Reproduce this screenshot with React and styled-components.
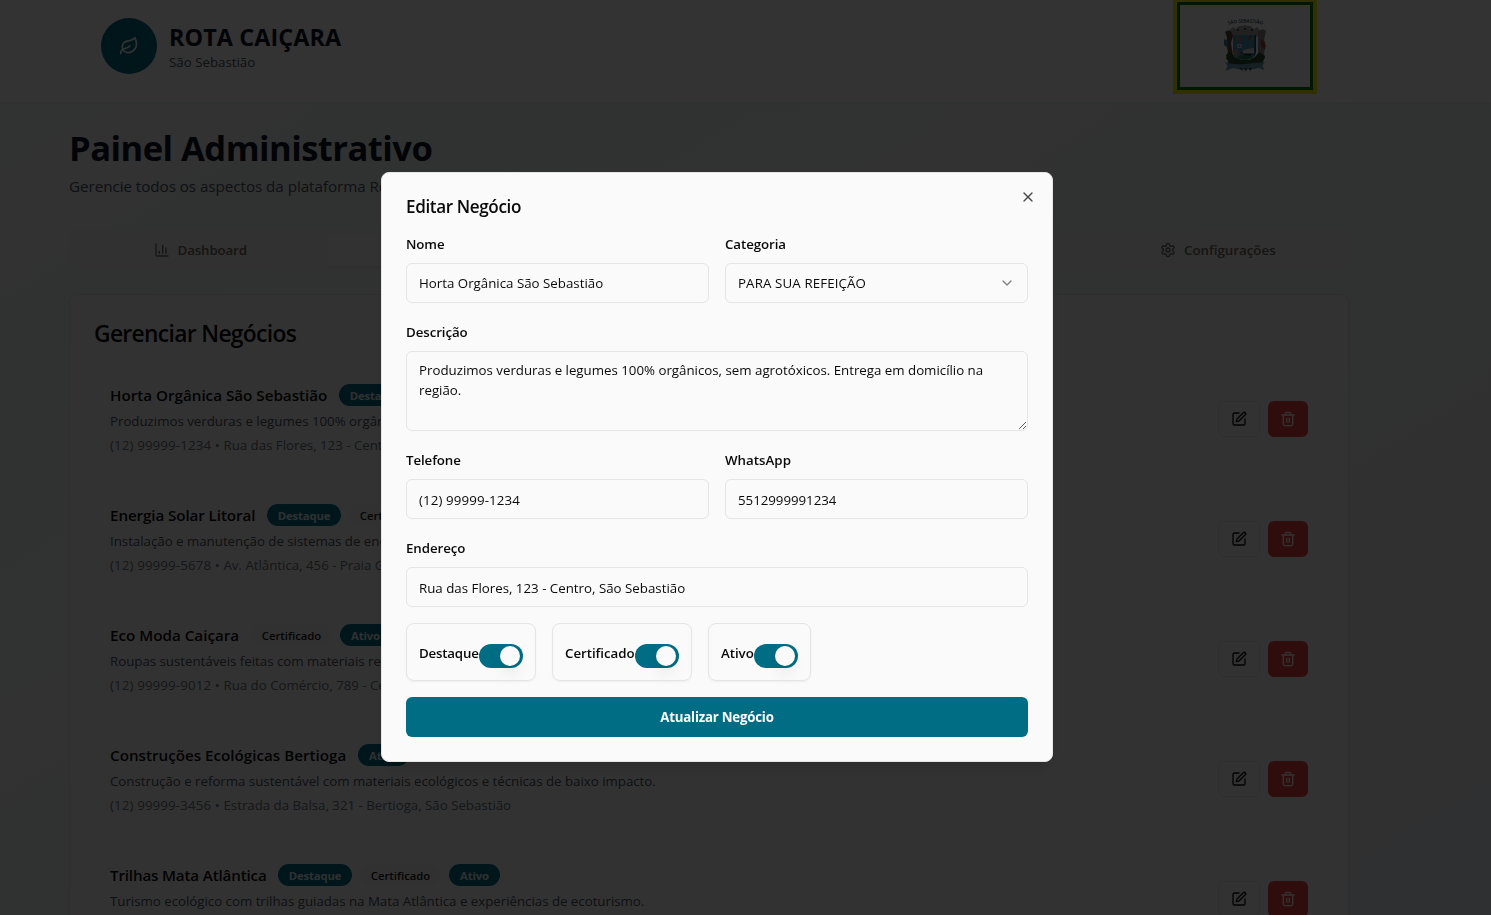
import React from "react";
import styled, { createGlobalStyle } from "styled-components";
import { Leaf, ChartColumn, SquarePen, Trash2, X, ChevronDown } from "lucide-react";

const GlobalStyle = createGlobalStyle`
  *, *::before, *::after { box-sizing: border-box; }
  html, body { margin: 0; height: 100%; overflow: hidden; }
  body {
    font-family: "Segoe UI", "Open Sans", "Noto Sans", sans-serif;
    color: #0a0a0a;
    font-size: 15px;
  }
  h1, h2, h3, p { margin: 0; }
  button { font-family: inherit; border: 0; padding: 0; }
`;

const Page = styled.div`
  height: 915px;
  overflow: hidden;
  background: linear-gradient(to bottom right, #f8faf9 0%, #f1f7f4 18%, #f2f7f5 42%, #f1f3f6 56%, #eceef3 100%);
`;

const Header = styled.header`
  height: 103px;
  background: #fefefe;
  border-bottom: 1px solid #eceeed;
  box-shadow: 0 1px 2px rgba(0, 0, 0, 0.05);
`;

const HeaderInner = styled.div`
  display: flex;
  align-items: center;
  justify-content: space-between;
  width: 1216px;
  height: 92px;
  margin-left: 101px;
`;

const Brand = styled.div`
  display: flex;
  align-items: center;
  gap: 12px;
`;

const BrandMark = styled.div`
  display: grid;
  place-items: center;
  width: 56px;
  height: 56px;
  border-radius: 50%;
  background: #006d85;
  color: #fff;
`;

const BrandName = styled.div`
  font-size: 23.4px;
  line-height: 32px;
  font-weight: 700;
  letter-spacing: 0.08px;
  color: #0f172a;
  white-space: nowrap;
`;

const BrandPlace = styled.div`
  font-size: 13.3px;
  line-height: 18px;
  color: #4b5563;
  white-space: nowrap;
`;

const Flag = styled.div`
  flex: none;
  width: 144px;
  height: 96px;
  border: 4px solid #f5f000;
`;

const FlagField = styled.div`
  display: grid;
  place-items: center;
  height: 100%;
  border: 3.5px solid #007a10;
  background: #fff;
`;

const Main = styled.main`
  width: 1280px;
  margin-left: 69px;
  padding-top: 25px;
`;

const PageTitle = styled.h1`
  font-size: 34.6px;
  line-height: 40px;
  font-weight: 700;
  letter-spacing: -0.55px;
  color: #0f172a;
`;

const PageLead = styled.p`
  margin-top: 6px;
  font-size: 15.2px;
  line-height: 24px;
  letter-spacing: -0.04px;
  color: #4b5563;
  white-space: nowrap;
`;

const TabList = styled.div`
  display: grid;
  grid-template-columns: repeat(5, 1fr);
  height: 40px;
  margin-top: 32px;
  padding: 4px;
  border-radius: 6px;
  background: #f5f4f3;
`;

const Tab = styled.div`
  display: flex;
  align-items: center;
  justify-content: center;
  gap: 8px;
  border-radius: 4px;
  font-size: 13.3px;
  font-weight: 600;
  letter-spacing: ${(p) => p.$track || 0}px;
  color: #6d6862;
  background: ${(p) => (p.$active ? "#fafafa" : "transparent")};
  box-shadow: ${(p) => (p.$active ? "0 1px 2px rgba(0,0,0,.08)" : "none")};
`;

const Card = styled.section`
  height: 760px;
  margin-top: 24px;
  padding: 24px;
  border: 1px solid #e5e5e5;
  border-radius: 8px;
  background: #fafafa;
  box-shadow: 0 1px 2px rgba(0, 0, 0, 0.05);
`;

const CardTitle = styled.h2`
  font-size: 22.8px;
  line-height: 29px;
  font-weight: 600;
  letter-spacing: -0.66px;
`;

const BusinessList = styled.div`
  display: flex;
  flex-direction: column;
  gap: 16px;
  margin-top: 19px;
`;

const BusinessRow = styled.div`
  display: flex;
  align-items: center;
  justify-content: space-between;
  height: 104px;
  padding: 16px;
`;

const BusinessInfo = styled.div`
  display: flex;
  flex-direction: column;
  gap: 4px;
`;

const NameLine = styled.div`
  display: flex;
  align-items: center;
  gap: 12px;
  height: 24px;
`;

const BusinessName = styled.h3`
  width: ${(p) => p.$width}px;
  font-size: 15.2px;
  line-height: 24px;
  font-weight: 600;
  letter-spacing: ${(p) => p.$track || 0}px;
  white-space: nowrap;
`;

const Badges = styled.div`
  display: flex;
  gap: 8px;
`;

const badgeWidths = { Destaque: 74, Certificado: 81, Ativo: 51 };

const Badge = styled.span`
  display: flex;
  align-items: center;
  justify-content: center;
  width: ${(p) => p.$width}px;
  height: 22px;
  border-radius: 11px;
  font-size: 11.3px;
  font-weight: ${(p) => (p.$quiet ? 600 : 700)};
  letter-spacing: ${(p) => (p.$quiet ? 0 : -0.15)}px;
  color: ${(p) => (p.$quiet ? "#171717" : "#e6f1f3")};
  background: ${(p) => (p.$quiet ? "#f7f6f5" : "#006d85")};
`;

const Detail = styled.p`
  font-size: 13.3px;
  line-height: 20px;
  letter-spacing: -0.02px;
  color: ${(p) => (p.$soft ? "#6b7280" : "#4b5563")};
  white-space: nowrap;
`;

const Phone = styled.span`
  letter-spacing: 0.13px;
`;

const RowActions = styled.div`
  display: flex;
  gap: 8px;
`;

const IconButton = styled.button`
  display: grid;
  place-items: center;
  width: ${(p) => (p.$danger ? 40 : 42)}px;
  height: 36px;
  border-radius: 6px;
  border: ${(p) => (p.$danger ? "0" : "1px solid #e5e5e5")};
  color: ${(p) => (p.$danger ? "#fafafa" : "#0a0a0a")};
  background: ${(p) => (p.$danger ? "#ef4444" : "#fafafa")};
`;

const Overlay = styled.div`
  position: fixed;
  inset: 0;
  padding: 172px 0 0 381px;
  background: rgba(0, 0, 0, 0.8);
`;

const Dialog = styled.div`
  position: relative;
  display: flex;
  flex-direction: column;
  gap: 16px;
  width: 672px;
  height: 590px;
  padding: 24px;
  border: 1px solid #e5e5e5;
  border-radius: 8px;
  background: #fafafa;
  box-shadow: 0 10px 15px -3px rgba(0, 0, 0, 0.1), 0 4px 6px -4px rgba(0, 0, 0, 0.1);
`;

const DialogTitle = styled.h2`
  height: 18px;
  font-size: 17.1px;
  line-height: 20px;
  font-weight: 600;
  letter-spacing: -0.38px;
`;

const CloseButton = styled.button`
  position: absolute;
  top: 16px;
  right: 16px;
  width: 16px;
  height: 16px;
  background: none;
  color: #0a0a0a;
  opacity: 0.75;
`;

const FieldPair = styled.div`
  display: grid;
  grid-template-columns: 1fr 1fr;
  gap: 16px;
`;

const Field = styled.div`
  display: flex;
  flex-direction: column;
  gap: 8px;
`;

const Label = styled.label`
  height: 24px;
  font-size: 13.3px;
  line-height: 26px;
  font-weight: 600;
  letter-spacing: ${(p) => p.$track ?? -0.08}px;
  white-space: nowrap;
`;

const TextBox = styled.div`
  display: flex;
  align-items: center;
  justify-content: space-between;
  height: 40px;
  padding: ${(p) => p.$drop || 0}px 12px 0;
  border: 1px solid #e5e5e5;
  border-radius: 6px;
  font-size: 13.3px;
  letter-spacing: ${(p) => p.$track || 0}px;
  white-space: nowrap;
`;

const TextArea = styled.div`
  height: 80px;
  padding: 8px 12px;
  border: 1px solid #e5e5e5;
  border-radius: 6px;
  font-size: 13.3px;
  line-height: 20px;
  letter-spacing: -0.01px;
  overflow: auto;
  resize: vertical;
`;

const Toggles = styled.div`
  display: flex;
  gap: 16px;
`;

const ToggleCard = styled.div`
  display: flex;
  align-items: flex-end;
  justify-content: space-between;
  width: ${(p) => p.$width}px;
  height: 58px;
  padding: 12px;
  border: 1px solid #e5e5e5;
  border-radius: 8px;
  box-shadow: 0 1px 2px rgba(0, 0, 0, 0.05);
`;

const ToggleLabel = styled(Label)`
  height: 30px;
  line-height: 30px;
`;

const Switch = styled.span`
  display: flex;
  justify-content: flex-end;
  flex: none;
  width: 44px;
  height: 24px;
  padding: 2px;
  border-radius: 12px;
  background: #006d85;
`;

const Knob = styled.span`
  width: 20px;
  height: 20px;
  margin-right: 1px;
  border-radius: 50%;
  background: #fafafa;
  box-shadow: 0 10px 15px -3px rgba(0, 0, 0, 0.1), 0 4px 6px -4px rgba(0, 0, 0, 0.1);
`;

const SubmitButton = styled.button`
  height: 40px;
  flex: none;
  border-radius: 6px;
  background: #006d85;
  color: #fafafa;
  font-size: 13.3px;
  font-weight: 700;
  letter-spacing: -0.24px;
`;

function GearIcon() {
  return (
    <svg width="16" height="16" viewBox="0 0 24 24" fill="none" stroke="currentColor" strokeWidth="2" strokeLinecap="round" strokeLinejoin="round">
      <path d="M12.22 2h-.44a2 2 0 0 0-2 2v.18a2 2 0 0 1-1 1.73l-.43.25a2 2 0 0 1-2 0l-.15-.08a2 2 0 0 0-2.73.73l-.22.38a2 2 0 0 0 .73 2.73l.15.1a2 2 0 0 1 1 1.72v.51a2 2 0 0 1-1 1.74l-.15.09a2 2 0 0 0-.73 2.73l.22.38a2 2 0 0 0 2.73.73l.15-.08a2 2 0 0 1 2 0l.43.25a2 2 0 0 1 1 1.73V20a2 2 0 0 0 2 2h.44a2 2 0 0 0 2-2v-.18a2 2 0 0 1 1-1.73l.43-.25a2 2 0 0 1 2 0l.15.08a2 2 0 0 0 2.73-.73l.22-.39a2 2 0 0 0-.73-2.73l-.15-.08a2 2 0 0 1-1-1.74v-.5a2 2 0 0 1 1-1.74l.15-.09a2 2 0 0 0 .73-2.73l-.22-.38a2 2 0 0 0-2.73-.73l-.15.08a2 2 0 0 1-2 0l-.43-.25a2 2 0 0 1-1-1.73V4a2 2 0 0 0-2-2z" />
      <circle cx="12" cy="12" r="3" />
    </svg>
  );
}

function CoatOfArms() {
  return (
    <svg width="44" height="60" viewBox="0 -4 44 60">
      <defs>
        <path id="motto" d="M4 5 Q22 0 41 5" />
      </defs>
      <text fontSize="4.6" fontWeight="600" fill="#333">
        <textPath href="#motto" startOffset="50%" textAnchor="middle">SÃO SEBASTIÃO</textPath>
      </text>
      <g transform="translate(0 -3)">
        <path d="M7 13l3-3 3 2 3-3h3l3-1 3 1h3l3 3 3-2 3 3-3 7H10z" fill="#a3a3a3" />
        <g fill="#333">
          <circle cx="15" cy="13" r="1" />
          <circle cx="22" cy="12" r="1" />
          <circle cx="29" cy="13" r="1" />
        </g>
        <path d="M2 15q5-4 7 1l1 3-2 7 2 13-5 4-2-1 2-8-2-6 1-8z" fill="#59483f" />
        <path d="M1 22l4 2v7l-4-3z" fill="#437b9c" />
        <path d="M35 15q5-5 8-1l-2 9 2 6-2 7 1 6h-4l-3-8z" fill="#8f8286" />
        <path d="M38 22l4 3v7l-4-2z" fill="#ae4438" />
        <path d="M3 38l5-3 4 5 7 3h7l6-3 4-5 6 4-3 9H6z" fill="#284b2c" />
        <path d="M10 18h23v17q-1 8-11.500 8t-11.500-8z" fill="#4f90ba" />
        <path d="M33 18v17l-1.500 5V18z" fill="#293d50" />
        <circle cx="16" cy="22" r="2.300" fill="#c07a50" />
        <path d="M24 19l2 2 3-2-1 4-2 1z" fill="#a76949" />
        <path d="M26 18.500h3v2.500h-3z" fill="#3f8050" />
        <path d="M14.500 27h4v4h-4z" fill="#dfe3ec" />
        <path d="M16 28h1.300v2H16z" fill="#a33c55" />
        <path d="M11 33h4v7h-3z" fill="#b08b58" />
        <path d="M17.500 34l3 1.500-3 2z" fill="#a33131" />
        <path d="M19 34l5-2 7-1v5h-10z" fill="#d9dcdf" />
        <path d="M20 37h10l-3 2h-5z" fill="#2c211b" />
        <path d="M14 40q8-4 16 0-4 3-8 3t-8-3z" fill="#1f7a44" />
        <path d="M2 45q9 3 19.500 2t20-2l-2 4 2 4-6-2q-13 3-26 0l-7 3 2-5z" fill="#6a9bb6" />
        <path d="M16 51h3l1 3zM21 51h3l-1 3.500zM26 51h3l-2 3z" fill="#333" />
      </g>
    </svg>
  );
}

const businesses = [
  {
    name: "Horta Orgânica São Sebastião",
    width: 217,
    badges: ["Destaque"],
    about: "Produzimos verduras e legumes 100% orgânicos",
    phone: "(12) 99999-1234",
    address: "Rua das Flores, 123 - Centro",
  },
  {
    name: "Energia Solar Litoral",
    width: 145,
    track: -0.1,
    badges: ["Destaque", "Certificado"],
    about: "Instalação e manutenção de sistemas de energia",
    phone: "(12) 99999-5678",
    address: "Av. Atlântica, 456 - Praia Grande",
  },
  {
    name: "Eco Moda Caiçara",
    width: 129,
    badges: ["Certificado", "Ativo"],
    about: "Roupas sustentáveis feitas com materiais reciclados",
    phone: "(12) 99999-9012",
    address: "Rua do Comércio, 789 - Centro",
  },
  {
    name: "Construções Ecológicas Bertioga",
    width: 236,
    badges: ["Ativo"],
    about: "Construção e reforma sustentável com materiais ecológicos e técnicas de baixo impacto.",
    phone: "(12) 99999-3456",
    address: "Estrada da Balsa, 321 - Bertioga, São Sebastião",
  },
  {
    name: "Trilhas Mata Atlântica",
    width: 156,
    track: -0.17,
    badges: ["Destaque", "Certificado", "Ativo"],
    about: "Turismo ecológico com trilhas guiadas na Mata Atlântica e experiências de ecoturismo.",
  },
];

function Business({ item }) {
  return (
    <BusinessRow>
      <BusinessInfo>
        <NameLine>
          <BusinessName $width={item.width} $track={item.track}>{item.name}</BusinessName>
          <Badges>
            {item.badges.map((b) => (
              <Badge key={b} $width={badgeWidths[b]} $quiet={b === "Certificado"}>{b}</Badge>
            ))}
          </Badges>
        </NameLine>
        <Detail>{item.about}</Detail>
        <Detail $soft>
          {item.phone ? <><Phone>{item.phone} • </Phone>{item.address}</> : "\u00a0"}
        </Detail>
      </BusinessInfo>
      <RowActions>
        <IconButton aria-label="Editar"><SquarePen size={16} /></IconButton>
        <IconButton $danger aria-label="Excluir"><Trash2 size={16} /></IconButton>
      </RowActions>
    </BusinessRow>
  );
}

function Toggle({ label, width, track }) {
  return (
    <ToggleCard $width={width}>
      <ToggleLabel $track={track}>{label}</ToggleLabel>
      <Switch><Knob /></Switch>
    </ToggleCard>
  );
}

function EditDialog() {
  return (
    <Dialog role="dialog">
      <DialogTitle>Editar Negócio</DialogTitle>
      <CloseButton aria-label="Fechar"><X size={16} /></CloseButton>
      <FieldPair>
        <Field>
          <Label>Nome</Label>
          <TextBox>Horta Orgânica São Sebastião</TextBox>
        </Field>
        <Field>
          <Label>Categoria</Label>
          <TextBox $track={0.12}>
            PARA SUA REFEIÇÃO
            <ChevronDown size={16} opacity={0.5} />
          </TextBox>
        </Field>
      </FieldPair>
      <Field>
        <Label>Descrição</Label>
        <TextArea>
          Produzimos verduras e legumes 100% orgânicos, sem agrotóxicos. Entrega em domicílio na região.
        </TextArea>
      </Field>
      <FieldPair>
        <Field>
          <Label $track={-0.1}>Telefone</Label>
          <TextBox $drop={2} $track={0.12}>(12) 99999-1234</TextBox>
        </Field>
        <Field>
          <Label $track={0.02}>WhatsApp</Label>
          <TextBox $drop={2} $track={-0.04}>5512999991234</TextBox>
        </Field>
      </FieldPair>
      <Field>
        <Label>Endereço</Label>
        <TextBox $drop={2}>Rua das Flores, 123 - Centro, São Sebastião</TextBox>
      </Field>
      <Toggles>
        <Toggle label="Destaque" width={130} track={-0.2} />
        <Toggle label="Certificado" width={140} track={-0.05} />
        <Toggle label="Ativo" width={103} track={-0.05} />
      </Toggles>
      <SubmitButton>Atualizar Negócio</SubmitButton>
    </Dialog>
  );
}

export default function App() {
  return (
    <>
      <GlobalStyle />
      <Page>
        <Header>
          <HeaderInner>
            <Brand>
              <BrandMark><Leaf size={20} /></BrandMark>
              <div>
                <BrandName>ROTA CAIÇARA</BrandName>
                <BrandPlace>São Sebastião</BrandPlace>
              </div>
            </Brand>
            <Flag>
              <FlagField><CoatOfArms /></FlagField>
            </Flag>
          </HeaderInner>
        </Header>
        <Main>
          <PageTitle>Painel Administrativo</PageTitle>
          <PageLead>Gerencie todos os aspectos da plataforma Rota</PageLead>
          <TabList>
            <Tab $track={-0.14}><ChartColumn size={16} />Dashboard</Tab>
            <Tab $active />
            <Tab />
            <Tab />
            <Tab><GearIcon />Configurações</Tab>
          </TabList>
          <Card>
            <CardTitle>Gerenciar Negócios</CardTitle>
            <BusinessList>
              {businesses.map((b) => <Business key={b.name} item={b} />)}
            </BusinessList>
          </Card>
        </Main>
      </Page>
      <Overlay>
        <EditDialog />
      </Overlay>
    </>
  );
}
